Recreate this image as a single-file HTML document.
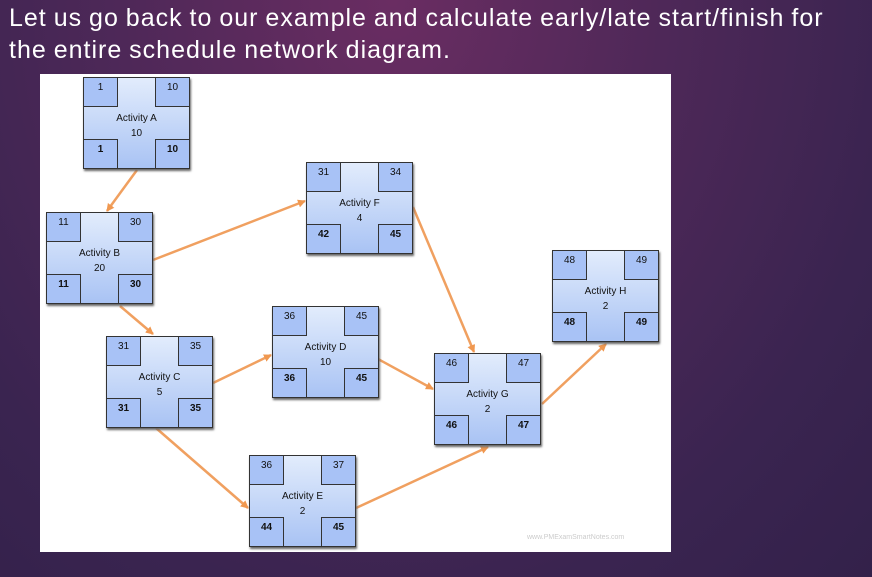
<!DOCTYPE html><html><head><style>
body{margin:0;width:872px;height:577px;overflow:hidden;background:radial-gradient(ellipse at 45% 0%,#6a2d62 0%,#4e2858 40%,#3a2450 75%,#33214a 100%);font-family:"Liberation Sans",sans-serif;position:relative}
.t{position:absolute;left:9px;top:2px;color:#fff;font-size:25px;line-height:32px;letter-spacing:1px;word-spacing:-1px}
.p{position:absolute;left:40px;top:74px;width:631px;height:478px;background:#fff}
.b{position:absolute;width:107px;height:92px;border:1px solid #333;box-sizing:border-box;background:linear-gradient(#e2ecfc,#a9c3f4);box-shadow:1px 2px 2px #666;font-size:10px;text-align:center;color:#111}
.q{position:absolute;width:35px;height:30px;background:#a8c2f6;border:1px solid #333;box-sizing:border-box;font-size:10px;line-height:20px}
.tl{left:-1px;top:-1px}.tr{right:-1px;top:-1px}.bl{left:-1px;bottom:-1px;font-weight:bold}.br{right:-1px;bottom:-1px;font-weight:bold}
.n{position:absolute;left:0;right:0;top:33px;line-height:15px}
svg{position:absolute;left:0;top:0}
.w{position:absolute;left:527px;top:534px;font-size:7px;color:#ccc}
</style></head><body>
<div class="t">Let us go back to our example and calculate early/late start/finish for<br>the entire schedule network diagram.</div>
<div class="p"></div>
<svg width="872" height="577"><defs><marker id="m" markerWidth="8" markerHeight="8" refX="7" refY="4" orient="auto" markerUnits="userSpaceOnUse"><path d="M0,0L8,4L0,8z" fill="#f09850"/></marker></defs>
<g stroke="#f0a060" stroke-width="2.5" marker-end="url(#m)">
<line x1="137" y1="170" x2="107" y2="211"/><line x1="153" y1="260" x2="305" y2="201"/><line x1="120" y1="306" x2="153" y2="334"/><line x1="213" y1="383" x2="271" y2="355"/><line x1="156" y1="428" x2="248" y2="508"/><line x1="378" y1="359" x2="433" y2="389"/><line x1="413" y1="207" x2="474" y2="352"/><line x1="356" y1="508" x2="488" y2="447"/><line x1="542" y1="404" x2="606" y2="344"/></g></svg>
<div class="b" style="left:83px;top:77px"><div class="q tl">1</div><div class="q tr">10</div><div class="n">Activity A<br>10</div><div class="q bl">1</div><div class="q br">10</div></div>
<div class="b" style="left:46px;top:212px"><div class="q tl">11</div><div class="q tr">30</div><div class="n">Activity B<br>20</div><div class="q bl">11</div><div class="q br">30</div></div>
<div class="b" style="left:306px;top:162px"><div class="q tl">31</div><div class="q tr">34</div><div class="n">Activity F<br>4</div><div class="q bl">42</div><div class="q br">45</div></div>
<div class="b" style="left:552px;top:250px"><div class="q tl">48</div><div class="q tr">49</div><div class="n">Activity H<br>2</div><div class="q bl">48</div><div class="q br">49</div></div>
<div class="b" style="left:272px;top:306px"><div class="q tl">36</div><div class="q tr">45</div><div class="n">Activity D<br>10</div><div class="q bl">36</div><div class="q br">45</div></div>
<div class="b" style="left:106px;top:336px"><div class="q tl">31</div><div class="q tr">35</div><div class="n">Activity C<br>5</div><div class="q bl">31</div><div class="q br">35</div></div>
<div class="b" style="left:434px;top:353px"><div class="q tl">46</div><div class="q tr">47</div><div class="n">Activity G<br>2</div><div class="q bl">46</div><div class="q br">47</div></div>
<div class="b" style="left:249px;top:455px"><div class="q tl">36</div><div class="q tr">37</div><div class="n">Activity E<br>2</div><div class="q bl">44</div><div class="q br">45</div></div>
<div class="w">www.PMExamSmartNotes.com</div>
</body></html>
